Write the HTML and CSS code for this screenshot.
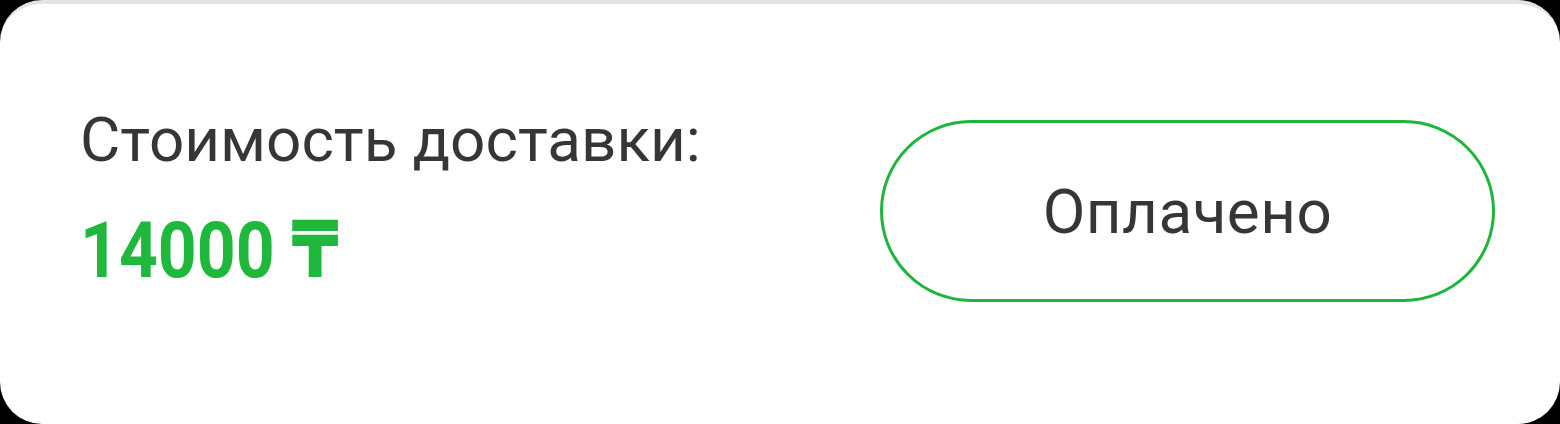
FILE: index.html
```html
<!DOCTYPE html>
<html lang="ru">
<head>
    <meta charset="UTF-8">
    <meta name="viewport" content="width=device-width, initial-scale=1.0">
    <title>Доставка</title>
    <link rel="stylesheet" href="styles.css">
</head>
<body>
    <div class="card">
        <div class="delivery-info">
            <div class="delivery-label">Стоимость доставки:</div>
            <div class="delivery-price"><span class="price-text">14000 ₸</span></div>
        </div>
        <button class="paid-button" type="button">Оплачено</button>
    </div>
</body>
</html>
```

FILE: styles.css
```css
body {
    background-color: #000;
    margin: 0;
    padding: 0;
    font-family: Roboto, "DejaVu Sans", sans-serif;
}

.card {
    box-sizing: border-box;
    width: 1560px;
    height: 424px;
    background-color: #fff;
    border-top: 4px solid #e4e4e4;
    border-radius: 42px;
    display: flex;
    align-items: flex-start;
    justify-content: space-between;
    padding: 100px 65px 0 80px;
}

.delivery-label {
    color: #363636;
    font-size: 62px;
    line-height: 72px;
}

.delivery-price {
    color: #1fb83c;
    font-weight: bold;
    font-size: 78px;
    line-height: 80px;
    margin-top: 35px;
}

/* the original font is a narrow DIN, squeeze Roboto to match */
.price-text {
    display: inline-block;
    transform: scaleX(0.87);
    transform-origin: left center;
}

.paid-button {
    box-sizing: border-box;
    width: 615px;
    height: 182px;
    margin-top: 16px;
    background-color: #fff;
    border: 3px solid #1db53b;
    border-radius: 91px;
    color: #363636;
    font-family: Roboto, "DejaVu Sans", sans-serif;
    font-size: 62px;
    letter-spacing: 0.5px;
    padding: 0;
    cursor: pointer;
}
```
